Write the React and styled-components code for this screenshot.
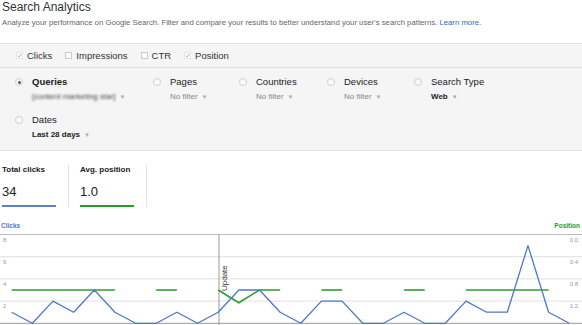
import React from "react";
import styled, { createGlobalStyle } from "styled-components";

const GlobalStyle = createGlobalStyle`
  body {
    margin: 0;
    background: #fff;
    font-family: "Liberation Sans", Arial, Helvetica, sans-serif;
    color: #222;
  }
`;

const Page = styled.div`
  width: 582px;
  height: 325px;
  overflow: hidden;
`;

const Header = styled.div`
  padding: 0 2px;
`;

const Title = styled.h1`
  margin: 0;
  font-size: 12px;
  font-weight: normal;
  line-height: 14px;
  color: #333;
`;

const Subtitle = styled.p`
  margin: 4px 0 0;
  font-size: 7.75px;
  line-height: 10px;
  color: #666;

  a {
    color: #3366cc;
    text-decoration: none;
  }
`;

const Panel = styled.div`
  margin-top: 15px;
  background: #f5f5f5;
  border-top: 1px solid #e0e0e0;
  border-bottom: 1px solid #e4e4e4;
`;

const CheckRow = styled.div`
  height: 23px;
  display: flex;
  align-items: center;
  gap: 13px;
  padding-left: 16px;
  border-bottom: 1px solid #e0e0e0;
`;

const CheckItem = styled.label`
  display: flex;
  align-items: center;
  gap: 4px;
  font-size: 9.5px;
  color: #333;
`;

const Box = styled.span`
  width: 7px;
  height: 7px;
  box-sizing: border-box;
  border: 1px solid ${(p) => (p.$checked ? "#e8e8e8" : "#c9c9c9")};
  background: #fff;
  display: flex;
  align-items: center;
  justify-content: center;
`;

const FilterGrid = styled.div`
  display: grid;
  grid-template-columns: 138px 86px 88px 87px 1fr;
  row-gap: 12px;
  padding: 8px 0 10px 15px;
`;

const Filter = styled.div`
  display: flex;
  gap: 9px;
`;

const Radio = styled.span`
  flex: none;
  width: 8px;
  height: 8px;
  margin-top: 2px;
  box-sizing: border-box;
  border-radius: 50%;
  border: 1px solid #cfcfcf;
  background: #fafafa;
  display: flex;
  align-items: center;
  justify-content: center;

  &::after {
    content: "";
    width: 3px;
    height: 3px;
    border-radius: 50%;
    background: ${(p) => (p.$on ? "#555" : "transparent")};
  }
`;

const FilterText = styled.div`
  display: flex;
  flex-direction: column;
  gap: 4px;
`;

const FilterName = styled.div`
  font-size: 9.5px;
  line-height: 12px;
  font-weight: ${(p) => (p.$on ? "bold" : "normal")};
  color: #222;
`;

const FilterValue = styled.div`
  display: flex;
  align-items: center;
  gap: 4px;
  font-size: 8px;
  line-height: 10px;
  white-space: nowrap;
  font-weight: ${(p) => (p.$bold ? "bold" : "normal")};
  color: ${(p) => (p.$bold ? "#222" : "#888")};
`;

const Blurred = styled.span`
  filter: blur(0.8px);
  color: #444;
`;

const Caret = styled.span`
  font-size: 6px;
  color: #aaa;
  font-weight: normal;
`;

const Stats = styled.div`
  display: flex;
  margin-top: 14px;
  padding-left: 2px;
`;

const Stat = styled.div`
  padding-right: 12px;
  margin-right: 11px;
  border-right: 1px solid #e2e2e2;
`;

const StatLabel = styled.div`
  font-size: 8px;
  line-height: 10px;
  font-weight: bold;
  color: #222;
`;

const StatValue = styled.div`
  margin-top: 9px;
  font-size: 13px;
  line-height: 16px;
  color: #222;
`;

const StatBar = styled.div`
  margin-top: 5px;
  width: ${(p) => p.$w}px;
  height: 2px;
  background: ${(p) => p.$color};
`;

const ChartHead = styled.div`
  display: flex;
  justify-content: space-between;
  margin-top: 15px;
  padding: 0 2px 0 1px;
  font-size: 6.5px;
  line-height: 8px;
  font-weight: bold;
`;

const AxisName = styled.span`
  color: ${(p) => p.$color};
`;

const ChartSvg = styled.svg`
  display: block;
  margin-top: 3px;
`;

const BLUE = "#4d77cc";
const GREEN = "#2a9f2a";

const clicks = [1, 0, 2, 1, 3, 1, 0, 0, 1, 0, 1, 3, 3, 1, 0, 2, 2, 0, 0, 1, 0, 0, 2, 1, 1, 7, 1, 0];
const positionRuns = [
  [0, 1, 2, 3, 4, 5],
  [7, 8],
  [10, 11, 12, 13],
  [15, 16],
  [19, 20],
  [22, 23, 24, 25, 26],
];
const positions = { 11: 1.23 };

const TOP = 1.5;
const STEP = 22.2;
const px = (i) => 11.7 + i * 20.65;
const clickY = (v) => TOP + 4 * STEP - v * (STEP / 2);
const posY = (p) => TOP + p * (STEP / 0.4);

function Chart() {
  const grid = [0, 1, 2, 3];
  const left = ["8", "6", "4", "2"];
  const right = ["0.0", "0.4", "0.8", "1.2"];
  return (
    <ChartSvg width="582" height="92" viewBox="0 0 582 92">
      {grid.map((g) => (
        <line key={g} x1="0" x2="582" y1={TOP + g * STEP} y2={TOP + g * STEP}
          stroke={g === 0 ? "#bdbdbd" : "#e0e0e0"} strokeWidth="1" />
      ))}
      <line x1="0" x2="582" y1={TOP + 4 * STEP} y2={TOP + 4 * STEP} stroke="#9a9a9a" strokeWidth="1" />
      {left.map((t, i) => (
        <text key={t} x="3" y={TOP + i * STEP + 7} fontSize="6" fill="#999">{t}</text>
      ))}
      {right.map((t, i) => (
        <text key={t} x="578" y={TOP + i * STEP + 7} fontSize="6" fill="#999" textAnchor="end">{t}</text>
      ))}
      <line x1="219" x2="219" y1={TOP} y2="92" stroke="#999" strokeWidth="1" />
      <text x="226.5" y="58" fontSize="8" fill="#333" transform="rotate(-90 226.5 58)">Update</text>
      {positionRuns.map((run, k) => (
        <polyline key={k} fill="none" stroke={GREEN} strokeWidth="1.6"
          points={run.map((i) => `${px(i)},${posY(positions[i] ?? 1)}`).join(" ")} />
      ))}
      <polyline fill="none" stroke={BLUE} strokeWidth="1.3" strokeLinejoin="round"
        points={clicks.map((v, i) => `${px(i)},${clickY(v)}`).join(" ")} />
    </ChartSvg>
  );
}

function Check({ checked }) {
  return (
    <Box $checked={checked}>
      {checked && (
        <svg width="7" height="7" viewBox="0 0 7 7">
          <path d="M1 3.8 L2.8 5.5 L6.2 1.2" fill="none" stroke="#777" strokeWidth="0.9" />
        </svg>
      )}
    </Box>
  );
}

const metrics = [
  { name: "Clicks", checked: true },
  { name: "Impressions", checked: false },
  { name: "CTR", checked: false },
  { name: "Position", checked: true },
];

const filters = [
  { name: "Queries", value: "[content marketing star]", on: true, blur: true },
  { name: "Pages", value: "No filter" },
  { name: "Countries", value: "No filter" },
  { name: "Devices", value: "No filter" },
  { name: "Search Type", value: "Web", bold: true },
  { name: "Dates", value: "Last 28 days", bold: true },
];

export default function App() {
  return (
    <Page>
      <GlobalStyle />
      <Header>
        <Title>Search Analytics</Title>
        <Subtitle>
          Analyze your performance on Google Search. Filter and compare your results to better understand your user's search patterns. <a href="#">Learn more.</a>
        </Subtitle>
      </Header>
      <Panel>
        <CheckRow>
          {metrics.map((m) => (
            <CheckItem key={m.name}>
              <Check checked={m.checked} />
              {m.name}
            </CheckItem>
          ))}
        </CheckRow>
        <FilterGrid>
          {filters.map((f) => (
            <Filter key={f.name}>
              <Radio $on={f.on} />
              <FilterText>
                <FilterName $on={f.on}>{f.name}</FilterName>
                <FilterValue $bold={f.bold}>
                  {f.blur ? <Blurred>{f.value}</Blurred> : f.value}
                  <Caret>▼</Caret>
                </FilterValue>
              </FilterText>
            </Filter>
          ))}
        </FilterGrid>
      </Panel>
      <Stats>
        <Stat>
          <StatLabel>Total clicks</StatLabel>
          <StatValue>34</StatValue>
          <StatBar $w={54} $color="#5b82d0" />
        </Stat>
        <Stat>
          <StatLabel>Avg. position</StatLabel>
          <StatValue>1.0</StatValue>
          <StatBar $w={54} $color="#22a022" />
        </Stat>
      </Stats>
      <ChartHead>
        <AxisName $color="#4f78c8">Clicks</AxisName>
        <AxisName $color="#2a9a2a">Position</AxisName>
      </ChartHead>
      <Chart />
    </Page>
  );
}
